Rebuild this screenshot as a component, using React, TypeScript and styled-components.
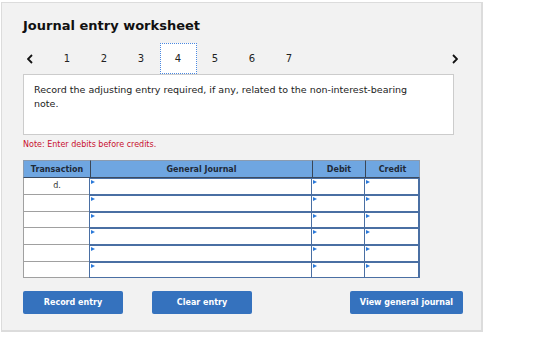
import React from 'react';
import styled, {createGlobalStyle} from 'styled-components';

const GlobalStyle = createGlobalStyle`
  html, body {
    margin: 0;
    padding: 0;
    background: #ffffff;
  }
  body {
    font-family: "DejaVu Sans", Verdana, sans-serif;
    color: #222;
  }
`;

const Panel = styled.div`
  box-sizing: border-box;
  width: 482px;
  height: 330px;
  margin: 2px 0 0 1px;
  padding: 15px 21px 0 21px;
  background: #f2f2f2;
  border: 1px solid #dcdcdc;
  border-right-width: 2px;
  border-bottom-width: 2px;
`;

const Title = styled.h1`
  margin: 0;
  font-size: 13px;
  font-weight: bold;
  line-height: 16px;
  color: #111;
`;

const Nav = styled.div`
  display: flex;
  align-items: stretch;
  height: 31px;
  margin-top: 9px;
`;

const Arrow = styled.div<{$right?: boolean}>`
  display: flex;
  align-items: center;
  width: ${p => (p.$right ? 'auto' : '25.5px')};
  margin-left: ${p => (p.$right ? 'auto' : '0')};
  padding: ${p => (p.$right ? '0 2px 0 0' : '0 0 0 4px')};
  box-sizing: border-box;
  svg {
    display: block;
  }
`;

const Tab = styled.div<{$active?: boolean}>`
  box-sizing: border-box;
  width: 37px;
  display: flex;
  align-items: center;
  justify-content: center;
  font-size: 10px;
  color: #222;
  background: ${p => (p.$active ? '#ffffff' : 'transparent')};
  border: 1px ${p => (p.$active ? 'dotted #4a88e0' : 'solid transparent')};
`;

const Prompt = styled.div`
  box-sizing: border-box;
  width: 431px;
  height: 61px;
  background: #ffffff;
  border: 1px solid #cccccc;
  padding: 8px 30px 0 10px;
  font-size: 9.5px;
  line-height: 13.5px;
  color: #222;
`;

const Note = styled.div`
  margin-top: 5px;
  font-size: 8px;
  line-height: 10px;
  color: #c8102e;
`;

const Grid = styled.div`
  display: grid;
  grid-template-columns: 67px 222px 53px 55px;
  grid-template-rows: 18px 17px 17px 16px 17px 17px 16px;
  width: 397px;
  margin-top: 10px;
`;

const Head = styled.div<{$first?: boolean; $last?: boolean}>`
  box-sizing: border-box;
  display: flex;
  align-items: center;
  justify-content: center;
  background: #6fa6e1;
  border-top: 1px solid #8a9bb0;
  border-bottom: 1px solid #3c4b60;
  border-left: 1px solid ${p => (p.$first ? '#8a9bb0' : '#3a4656')};
  border-right: ${p => (p.$last ? '1px solid #8a9bb0' : 'none')};
  font-size: 8px;
  font-weight: bold;
  color: #1e2a38;
`;

const RefCell = styled.div`
  box-sizing: border-box;
  display: flex;
  justify-content: center;
  padding-top: 3px;
  background: #ffffff;
  border-left: 1px solid #a0a0a0;
  border-bottom: 1px solid #a0a0a0;
  font-size: 8px;
  color: #333;
`;

const Input = styled.div<{$last?: boolean}>`
  position: relative;
  box-sizing: border-box;
  background: #ffffff;
  border: 1px solid #4a6fa3;
  border-right-width: ${p => (p.$last ? '2px' : '1px')};
  margin-left: -1px;
  &::before {
    content: '';
    position: absolute;
    top: 1px;
    left: 1px;
    width: 0;
    height: 0;
    border-top: 2px solid transparent;
    border-bottom: 2px solid transparent;
    border-left: 4px solid #2a78d8;
  }
`;

const Actions = styled.div`
  display: flex;
  align-items: center;
  margin-top: 13px;
  width: 440px;
`;

const Button = styled.button<{$gap?: string; $w?: number}>`
  box-sizing: border-box;
  height: 23px;
  width: ${p => p.$w || 100}px;
  padding: 0;
  margin-left: ${p => p.$gap || '0'};
  border: none;
  border-radius: 2px;
  background: #3572be;
  color: #ffffff;
  font-family: "DejaVu Sans", Verdana, sans-serif;
  font-size: 8px;
  font-weight: bold;
`;

const rows = ['d.', '', '', '', '', ''];

const Chevron = ({right}: {right?: boolean}) => (
  <svg width="6" height="10" viewBox="0 0 6 10">
    <path
      d={right ? 'M1 1 L5 5 L1 9' : 'M5 1 L1 5 L5 9'}
      fill="none"
      stroke="#111"
      strokeWidth="1.8"
    />
  </svg>
);

const App = () => {
  return (
    <>
      <GlobalStyle />
      <Panel>
        <Title>Journal entry worksheet</Title>
        <Nav>
          <Arrow>
            <Chevron />
          </Arrow>
          {[1, 2, 3, 4, 5, 6, 7].map(n => (
            <Tab key={n} $active={n === 4}>
              {n}
            </Tab>
          ))}
          <Arrow $right>
            <Chevron right />
          </Arrow>
        </Nav>
        <Prompt>
          Record the adjusting entry required, if any, related to the
          non-interest-bearing note.
        </Prompt>
        <Note>Note: Enter debits before credits.</Note>
        <Grid>
          <Head $first>Transaction</Head>
          <Head>General Journal</Head>
          <Head>Debit</Head>
          <Head $last>Credit</Head>
          {rows.map((r, i) => (
            <React.Fragment key={i}>
              <RefCell>{r}</RefCell>
              <Input />
              <Input />
              <Input $last />
            </React.Fragment>
          ))}
        </Grid>
        <Actions>
          <Button>Record entry</Button>
          <Button $gap="29px">Clear entry</Button>
          <Button $gap="auto" $w={113}>
            View general journal
          </Button>
        </Actions>
      </Panel>
    </>
  );
};

export default App;
